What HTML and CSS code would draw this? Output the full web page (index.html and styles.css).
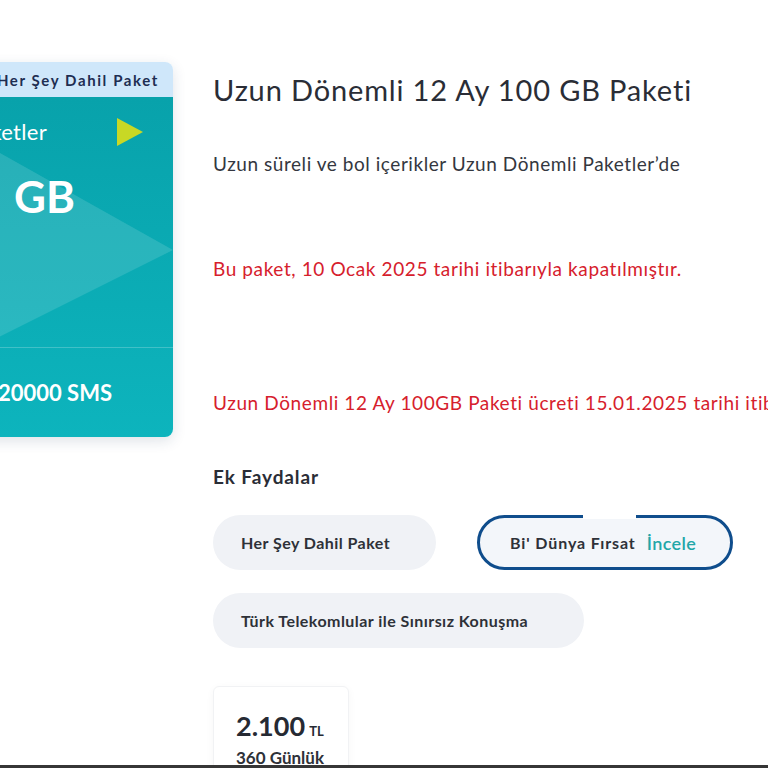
FILE: index.html
```html
<!DOCTYPE html>
<html lang="tr">
<head>
<meta charset="utf-8">
<title>Uzun Dönemli 12 Ay 100 GB Paketi</title>
<link rel="stylesheet" href="styles.css">
</head>
<body>
<div class="page">
  <aside class="side">
    <div class="card">
      <div class="card-band">Her Şey Dahil Paket</div>
      <div class="card-body">
        <div class="card-top">
          <div class="card-title-row">
            <span class="card-title">Uzun Dönemli Paketler</span>
            <svg class="card-play" width="26" height="28" viewBox="0 0 26 28"><polygon points="0,0 26,14 0,28" fill="#c8d825"/></svg>
          </div>
          <div class="card-gb"><span class="card-gb-num">100</span>GB</div>
        </div>
        <div class="card-bottom">
          <span class="card-sms">Sınırsız Dakika 20000 SMS</span>
        </div>
      </div>
    </div>
  </aside>
  <main class="main">
    <h1 class="title">Uzun Dönemli 12 Ay 100 GB Paketi</h1>
    <p class="subtitle">Uzun süreli ve bol içerikler Uzun Dönemli Paketler’de</p>
    <p class="notice notice-1">Bu paket, 10 Ocak 2025 tarihi itibarıyla kapatılmıştır.</p>
    <p class="notice notice-2">Uzun Dönemli 12 Ay 100GB Paketi ücreti 15.01.2025 tarihi itibarıyla güncellenmiştir.</p>
    <h2 class="section-title">Ek Faydalar</h2>
    <div class="pills">
      <div class="pill pill-a">Her Şey Dahil Paket</div>
      <div class="pill pill-b"><span class="gap-mask"></span>Bi' Dünya Fırsat <span class="pill-link">İncele</span></div>
      <div class="pill pill-c">Türk Telekomlular ile Sınırsız Konuşma</div>
    </div>
    <div class="price-card">
      <div class="price"><span class="price-num">2.100</span> <span class="price-cur">TL</span></div>
      <div class="price-period">360 Günlük</div>
    </div>
  </main>
</div>
<div class="bottom-bar"></div>
</body>
</html>
```
FILE: styles.css
```css
* { box-sizing: border-box; }
html, body { margin: 0; padding: 0; }
body {
  width: 768px;
  height: 768px;
  overflow: hidden;
  background: #fff;
  font-family: Lato, "Noto Sans", sans-serif;
  color: #2e3138;
}
.page {
  display: flex;
  align-items: flex-start;
  gap: 40px;
}
.side {
  flex: none;
  margin-left: -127px;
  padding-top: 62px;
}
.card {
  width: 300px;
  border-radius: 8px;
  overflow: hidden;
  box-shadow: 0 4px 14px rgba(30, 60, 90, 0.14);
}
.card-band {
  height: 35px;
  background: #cfe7fa;
  color: #1e2e52;
  font-weight: 700;
  font-size: 15px;
  letter-spacing: 1.6px;
  display: flex;
  align-items: center;
  justify-content: flex-end;
  padding-right: 14px;
  white-space: nowrap;
}
.card-body {
  position: relative;
  background: linear-gradient(180deg, #08a2ab 0%, #0db4bd 100%);
  color: #fff;
  overflow: hidden;
}
.card-body::before {
  content: "";
  position: absolute;
  left: 0; top: 0;
  width: 300px;
  height: 251px;
  background: rgba(255, 255, 255, 0.13);
  clip-path: polygon(0 -15px, 100% 153px, 0 303px);
}
.card-top {
  position: relative;
  height: 251px;
  padding-top: 20px;
  border-bottom: 1px solid rgba(255, 255, 255, 0.22);
}
.card-title-row {
  display: flex;
  justify-content: flex-end;
  align-items: center;
  gap: 70px;
  padding-right: 30px;
  height: 30px;
}
.card-title {
  font-size: 22px;
  line-height: 30px;
  white-space: nowrap;
  letter-spacing: 0.3px;
}
.card-play { display: block; flex: none; }
.card-gb {
  margin-top: 24px;
  font-size: 44px;
  line-height: 50px;
  font-weight: 700;
  text-align: right;
  padding-right: 98px;
  white-space: nowrap;
}
.card-gb-num { margin-right: 24px; }
.card-bottom {
  position: relative;
  height: 89px;
  display: flex;
  align-items: center;
  justify-content: flex-end;
  padding-right: 61px;
}
.card-sms {
  font-size: 22px;
  font-weight: 700;
  white-space: nowrap;
}
.main {
  flex: 1;
  min-width: 0;
  padding-top: 72px;
}
.title {
  margin: 0;
  font-size: 29px;
  line-height: 36px;
  font-weight: 400;
  letter-spacing: 0.85px;
  color: #2a2d36;
  white-space: nowrap;
}
.subtitle {
  margin: 43px 0 0;
  font-size: 19px;
  line-height: 26px;
  letter-spacing: 0.55px;
  color: #343740;
  white-space: nowrap;
}
.notice {
  font-size: 19px;
  line-height: 26px;
  letter-spacing: 0.6px;
  color: #d6202c;
  white-space: nowrap;
}
.notice-1 { margin: 79px 0 0; }
.notice-2 { margin: 108px 0 0; }
.section-title {
  margin: 48px 0 0;
  font-size: 19px;
  line-height: 26px;
  font-weight: 700;
  letter-spacing: 0.9px;
  color: #2a2d36;
}
.pills {
  margin-top: 25px;
  display: flex;
  flex-wrap: wrap;
  column-gap: 41px;
  row-gap: 23px;
  width: 560px;
}
.pill {
  position: relative;
  height: 55px;
  border-radius: 28px;
  background: #f0f2f6;
  display: flex;
  align-items: center;
  padding-left: 28px;
  font-size: 16px;
  font-weight: 700;
  letter-spacing: 0.45px;
  color: #2e3138;
  white-space: nowrap;
}
.pill-a { width: 223px; }
.pill-b {
  width: 256px;
  border: 3px solid #0f4d8c;
  background: #f3f6fa;
  padding-left: 30px;
  gap: 11px;
  letter-spacing: 0.9px;
}
.pill-c { width: 371px; }
.pill-link {
  color: #22a6a8;
  font-size: 18px;
  font-weight: 600;
  letter-spacing: 0.4px;
}
.gap-mask {
  position: absolute;
  left: 103px;
  top: -4px;
  width: 53px;
  height: 5px;
  background: #fff;
}
.price-card {
  margin-top: 38px;
  width: 136px;
  height: 120px;
  padding: 24px 0 0 22px;
  border: 1px solid #f1f2f4;
  border-radius: 6px;
  box-shadow: 0 2px 8px rgba(0, 0, 0, 0.04);
}
.price {
  line-height: 30px;
  white-space: nowrap;
}
.price-num {
  font-size: 27px;
  font-weight: 700;
  color: #262a33;
}
.price-cur {
  font-size: 13px;
  font-weight: 700;
  color: #262a33;
}
.price-period {
  margin-top: 1px;
  font-size: 17px;
  font-weight: 700;
  color: #2e3138;
  white-space: nowrap;
}
.bottom-bar {
  position: fixed;
  left: 0; right: 0; bottom: 0;
  height: 3px;
  background: #363636;
}
```
